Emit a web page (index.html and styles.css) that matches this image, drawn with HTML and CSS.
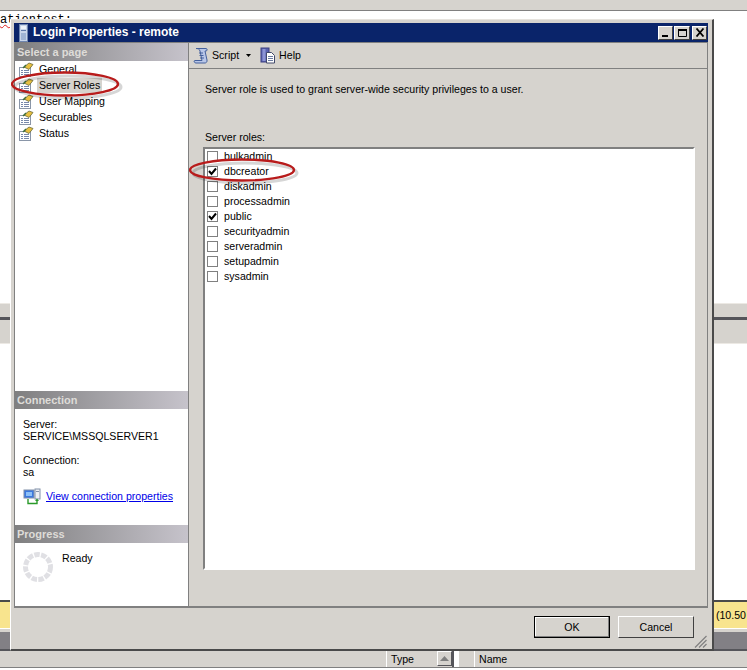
FILE: index.html
```html
<!DOCTYPE html>
<html lang="en">
<head>
<meta charset="utf-8">
<title>Login Properties - remote</title>
<link rel="stylesheet" href="styles.css">
</head>
<body>
<svg class="defs" width="0" height="0" aria-hidden="true">
  <defs>
    <symbol id="page" viewBox="0 0 16 16">
      <rect x="1.5" y="6.5" width="11" height="9" fill="#fff" stroke="#8a96a8"/>
      <path d="M3 9.500h2M6 9.500h5M3 11.500h2M6 11.500h5M3 13.500h2M6 13.500h5" stroke="#7788aa"/>
      <path d="M6 6l5-4 4 1.500-4 5z" fill="#e8c040" stroke="#6a6a3a" stroke-width=".8"/>
      <path d="M5 7l3-3" stroke="#3c6e3c" stroke-width="1.500"/>
    </symbol>
  </defs>
</svg>

<div class="backdrop">
  <div class="bar-top"></div>
  <div class="editor"><code class="code">atientest:</code></div>
  <div class="band"></div>
  <div class="editor-lower"></div>
  <div class="status-yellow"><span class="version">(10.50</span></div>
  <div class="status-gap"></div>
  <div class="status-gray"></div>
  <div class="bar-bottom">
    <span class="col col-blank"></span>
    <span class="col col-type">Type
      <span class="sort"><svg width="9" height="5" viewBox="0 0 9 5"><path d="M4.500 0L9 5H0z" fill="#808080"/></svg></span>
    </span>
    <span class="col col-small"></span>
    <span class="col col-name">Name</span>
  </div>
</div>

<section class="window">
  <header class="titlebar">
    <svg class="title-icon" width="9" height="18" viewBox="0 0 9 18">
      <rect x=".5" y=".5" width="8" height="17" fill="#c9d6ea" stroke="#6f86b0"/>
      <rect x="2" y="2" width="5" height="3" fill="#eef3fa"/>
      <rect x="2" y="6" width="5" height="1" fill="#5d78a8"/>
      <rect x="2" y="9" width="5" height="7" fill="#9fb4d4"/>
    </svg>
    <h1 class="title">Login Properties - remote</h1>
    <div class="controls">
      <button class="ctl" aria-label="Minimize"><svg width="10" height="10" viewBox="0 0 10 10"><rect x="1" y="7" width="6" height="2" fill="#000"/></svg></button>
      <button class="ctl ctl-max" aria-label="Maximize"><svg width="11" height="10" viewBox="0 0 11 10"><path d="M1.500 1.500h8v7h-8z" fill="none" stroke="#000"/><rect x="1" y="1" width="9" height="2" fill="#000"/></svg></button>
      <button class="ctl ctl-close" aria-label="Close"><svg width="10" height="9" viewBox="0 0 10 9"><path d="M1.500 .5l7 8M8.500 .5l-7 8" stroke="#000" stroke-width="1.800"/></svg></button>
    </div>
  </header>

  <div class="main">
    <aside class="side">
      <div class="section-head">Select a page</div>
      <ul class="pages">
        <li class="page"><svg class="page-icon"><use href="#page"/></svg><span class="page-name">General</span></li>
        <li class="page"><svg class="page-icon"><use href="#page"/></svg><span class="page-name is-selected">Server Roles</span></li>
        <li class="page"><svg class="page-icon"><use href="#page"/></svg><span class="page-name">User Mapping</span></li>
        <li class="page"><svg class="page-icon"><use href="#page"/></svg><span class="page-name">Securables</span></li>
        <li class="page"><svg class="page-icon"><use href="#page"/></svg><span class="page-name">Status</span></li>
      </ul>
      <div class="section-head">Connection</div>
      <div class="conn">
        <p class="conn-line">Server:<br>SERVICE\MSSQLSERVER1</p>
        <p class="conn-line">Connection:<br>sa</p>
        <div class="conn-link">
          <svg width="18" height="17" viewBox="0 0 18 17">
            <rect x="1" y="2" width="10" height="8" fill="#3a78e0" stroke="#8090a8"/>
            <rect x="3" y="4" width="6" height="4" fill="#8cc0f8"/>
            <rect x="12" y="1" width="5" height="10" fill="#eef0f4" stroke="#8090a8"/>
            <rect x="13" y="3" width="3" height="1" fill="#8090a8"/>
            <path d="M5 11v4.500h9V12" fill="none" stroke="#2a9a2a" stroke-width="1.400"/>
            <path d="M12 13l2-2.500 2 2.500z" fill="#2a9a2a"/>
          </svg>
          <a class="link" href="#">View connection properties</a>
        </div>
      </div>
      <div class="section-head">Progress</div>
      <div class="progress">
        <svg class="spinner" width="32" height="32" viewBox="0 0 32 32">
          <circle cx="16" cy="16" r="12.500" fill="none" stroke="#e0e0e4" stroke-width="5" stroke-dasharray="5.500 1.350"/>
        </svg>
        <span class="ready">Ready</span>
      </div>
    </aside>

    <div class="content">
      <div class="toolbar">
        <span class="tool">
          <svg width="16" height="17" viewBox="0 0 16 17">
            <path d="M3 1.500h10c1.500 0 1.500 2.500 0 2.500h-1l2 9c.4 2-1 3-2 3H3c-2 0-2.500-2.500-1-2.500h7L7 4C6.500 2 5 1.500 3 1.500z" fill="#b8c6e8" stroke="#44609c"/>
            <path d="M6 6h4M6.500 8.500h4M7 11h4" stroke="#44609c"/>
          </svg>
          Script
          <svg class="caret" width="5" height="3" viewBox="0 0 5 3"><path d="M0 0h5L2.500 3z" fill="#000"/></svg>
        </span>
        <span class="tool-sep"></span>
        <span class="tool">
          <svg width="16" height="17" viewBox="0 0 16 17">
            <rect x="1" y="1" width="8" height="14" fill="#5a62b0" stroke="#3a3f80"/>
            <rect x="2.500" y="2" width="3" height="12" fill="#8c94d4"/>
            <path d="M6.500 5.500h5l3 3v7.500h-8z" fill="#fff" stroke="#40486a"/>
            <path d="M8 9.500h5M8 11.500h5M8 13.500h5" stroke="#6a7aa0"/>
          </svg>
          Help
        </span>
      </div>

      <div class="panel">
        <p class="intro">Server role is used to grant server-wide security privileges to a user.</p>
        <label class="list-label">Server roles:</label>
        <ul class="roles">
          <li class="role"><span class="box"></span>bulkadmin</li>
          <li class="role"><span class="box is-on"><svg width="9" height="9" viewBox="0 0 9 9"><path d="M1 4l2.500 3L8 1.500" fill="none" stroke="#000" stroke-width="2"/></svg></span>dbcreator</li>
          <li class="role"><span class="box"></span>diskadmin</li>
          <li class="role"><span class="box"></span>processadmin</li>
          <li class="role"><span class="box is-on"><svg width="9" height="9" viewBox="0 0 9 9"><path d="M1 4l2.500 3L8 1.500" fill="none" stroke="#000" stroke-width="2"/></svg></span>public</li>
          <li class="role"><span class="box"></span>securityadmin</li>
          <li class="role"><span class="box"></span>serveradmin</li>
          <li class="role"><span class="box"></span>setupadmin</li>
          <li class="role"><span class="box"></span>sysadmin</li>
        </ul>
      </div>
    </div>
  </div>

  <footer class="footer">
    <button class="btn btn-default">OK</button>
    <button class="btn">Cancel</button>
    <svg class="grip" width="13" height="13" viewBox="0 0 13 13"><path d="M12.500 1L1 12.500M12.500 5L5 12.500M12.500 9L9 12.500" stroke="#808080" stroke-width="1.200"/></svg>
  </footer>
</section>

<svg class="mark mark-a" width="116" height="36" viewBox="0 0 116 36">
  <ellipse cx="57" cy="17" rx="53" ry="11" fill="none" stroke="#000" stroke-opacity=".16" stroke-width="3"/>
  <ellipse cx="54" cy="14" rx="53" ry="11.500" fill="none" stroke="#b81c1c" stroke-width="2.400"/>
</svg>
<svg class="mark mark-b" width="116" height="30" viewBox="0 0 116 30">
  <ellipse cx="56" cy="15" rx="52" ry="10" fill="none" stroke="#000" stroke-opacity=".16" stroke-width="3"/>
  <ellipse cx="53" cy="12" rx="52" ry="10.500" fill="none" stroke="#b81c1c" stroke-width="2.400"/>
</svg>
</body>
</html>
```

FILE: styles.css
```css
* { box-sizing: border-box; }

html, body {
  margin: 0;
  padding: 0;
}

body {
  position: relative;
  width: 747px;
  height: 670px;
  overflow: hidden;
  background: #fff;
  font: 10.6px/13px "Liberation Sans", Arial, sans-serif;
  color: #000;
}

.defs { position: absolute; }

/* ---------- application behind the dialog ---------- */
.backdrop {
  display: flex;
  flex-direction: column;
  height: 670px;
}

.bar-top {
  height: 11px;
  background: #d6d3ce;
  border-bottom: 1px solid #808080;
}

.editor {
  height: 292px;
  overflow: hidden;
  background: #fff;
}

.code {
  display: block;
  margin-top: 3px;
  font: 12px/13px "Liberation Mono", monospace;
  text-decoration: underline wavy #e02020 1px;
}

.band {
  height: 41px;
  background: linear-gradient(#d6d3ce 0 13px, #55555a 13px 16px, #d6d3ce 16px);
  border-top: 1px solid #ece9e4;
  border-bottom: 1px solid #ece9e4;
}

.editor-lower {
  height: 258px;
  background: #fff;
  border-bottom: 2px solid #4a4a4a;
}

.status-yellow {
  display: flex;
  justify-content: flex-end;
  align-items: center;
  height: 26px;
  background: #f8e48e;
  overflow: hidden;
}

.version {
  white-space: nowrap;
  margin-right: 1px;
}

.status-gap {
  height: 4px;
  background: #d6d3ce;
  border-top: 1px solid #fff;
}

.status-gray {
  height: 17px;
  background: #828085;
}

.bar-bottom {
  display: flex;
  flex: none;
  height: 19px;
  padding-left: 386px;
  background: #d6d3ce;
  border-top: 2px solid #55555a;
  border-bottom: 1px solid #808080;
  line-height: 16px;
}

.col { display: block; height: 16px; }

.col-type {
  position: relative;
  width: 68px;
  padding-left: 4px;
  border-left: 1px solid #fff;
  border-right: 2px solid #55555a;
}

.sort {
  position: absolute;
  top: 0;
  right: 0;
  display: flex;
  align-items: center;
  justify-content: center;
  width: 15px;
  height: 15px;
  background: #d6d3ce;
  border: 1px solid;
  border-color: #fff #55555a #55555a #fff;
}

.col-small {
  width: 21px;
  border-left: 5px solid #fff;
  border-right: 1px solid #fff;
}

.col-name { padding-left: 4px; }

/* ---------- dialog ---------- */
.window {
  position: absolute;
  left: 10px;
  top: 19px;
  width: 704px;
  height: 632px;
  display: flex;
  flex-direction: column;
  padding: 3px 3px 0 3px;
  background: #d6d3ce;
  border: 1px solid;
  border-color: #e6e3de #4a4a4a #4a4a4a #fff;
  border-width: 1px 2px 2px 1px;
}

.titlebar {
  display: flex;
  align-items: center;
  flex: none;
  height: 19px;
  padding: 0 1px 0 5px;
  margin: 0 1px 0 0;
  background: #0a246a;
}

.title-icon { flex: none; margin-right: 5px; }

.title {
  flex: 1;
  margin: 0;
  color: #fff;
  font: bold 12px/13px "Liberation Sans", Arial, sans-serif;
}

.controls { display: flex; gap: 1px; }

.ctl {
  display: flex;
  align-items: center;
  justify-content: center;
  width: 15px;
  height: 14px;
  padding: 0;
  background: #d6d3ce;
  border: 1px solid;
  border-color: #fff #404040 #404040 #fff;
}

.ctl-max { width: 16px; }

.ctl-close { margin-left: 1px; }

.main {
  display: flex;
  flex: none;
  height: 566px;
  border-top: 1px solid #808080;
  border-bottom: 2px solid #808080;
  border-left: 1px solid #808080;
  margin-right: 1px;
  border-right: 1px solid #808080;
}

.side {
  display: flex;
  flex-direction: column;
  flex: none;
  width: 174px;
  background: #fff;
  border-right: 1px solid #808080;
}

.section-head {
  flex: none;
  height: 18px;
  padding: 3px 0 0 2px;
  background: linear-gradient(90deg, #7f7f80, #c6c3cb);
  color: #dedcd8;
  font: bold 11px/13px "Liberation Sans", Arial, sans-serif;
}

.pages {
  flex: none;
  height: 330px;
  margin: 0;
  padding: 0;
  list-style: none;
}

.page {
  display: flex;
  align-items: center;
  height: 16px;
  padding-left: 3px;
  gap: 3px;
}

.page-icon { width: 16px; height: 16px; flex: none; }

.page-name { padding: 0 2px; line-height: 15px; }

.is-selected { background: #d6d3ce; }

.conn {
  flex: none;
  height: 116px;
  padding: 9px 0 0 8px;
}

.conn-line { margin: 0 0 12px; line-height: 12px; }

.conn-link {
  display: flex;
  align-items: center;
  gap: 5px;
  margin-top: -2px;
}

.link { color: #0000e8; }

.progress {
  display: flex;
  flex: 1;
  padding: 7px 0 0 7px;
}

.spinner { flex: none; margin-top: 1px; }

.ready { margin-left: 8px; margin-top: 2px; }

.content {
  display: flex;
  flex-direction: column;
  flex: 1;
  min-width: 0;
  background: #d6d3ce;
}

.toolbar {
  display: flex;
  align-items: center;
  flex: none;
  height: 26px;
  padding: 0 4px 0 4px;
  border-bottom: 1px solid #808080;
}

.tool {
  display: flex;
  align-items: center;
  gap: 3px;
}

.caret { margin-left: 4px; }

.tool-sep { width: 9px; }

.panel {
  display: flex;
  flex-direction: column;
  flex: 1;
  padding: 14px 12px 36px 16px;
}

.intro { margin: 0 0 35px; line-height: 13px; }

.list-label { display: block; margin-bottom: 3px; }

.roles {
  flex: 1;
  margin: 0 0 0 -2px;
  padding: 0;
  list-style: none;
  background: #fff;
  border: 2px solid;
  border-color: #808080 #fff #fff #808080;
  outline: 1px solid #d6d3ce;
}

.role {
  display: flex;
  align-items: center;
  height: 15px;
  padding-left: 2px;
  gap: 6px;
}

.box {
  display: flex;
  align-items: center;
  justify-content: center;
  flex: none;
  width: 11px;
  height: 11px;
  background: #fff;
  border: 1px solid #808080;
}

.footer {
  position: relative;
  display: flex;
  justify-content: flex-end;
  gap: 8px;
  flex: 1;
  padding: 8px 15px 0 0;
}

.btn {
  width: 76px;
  height: 22px;
  padding: 0;
  background: #d6d3ce;
  border: 1px solid;
  border-color: #fff #404040 #404040 #fff;
  font: 10.6px/13px "Liberation Sans", Arial, sans-serif;
  color: #000;
}

.btn-default {
  border: 1px solid #000;
  box-shadow: inset -1px -1px 0 #808080, inset 1px 1px 0 #fff;
}

.grip {
  position: absolute;
  right: 2px;
  bottom: 1px;
}

/* ---------- red callouts drawn over the screenshot ---------- */
.mark { position: absolute; pointer-events: none; }
.mark-a { left: 11px; top: 70px; }
.mark-b { left: 189px; top: 158px; }
```
